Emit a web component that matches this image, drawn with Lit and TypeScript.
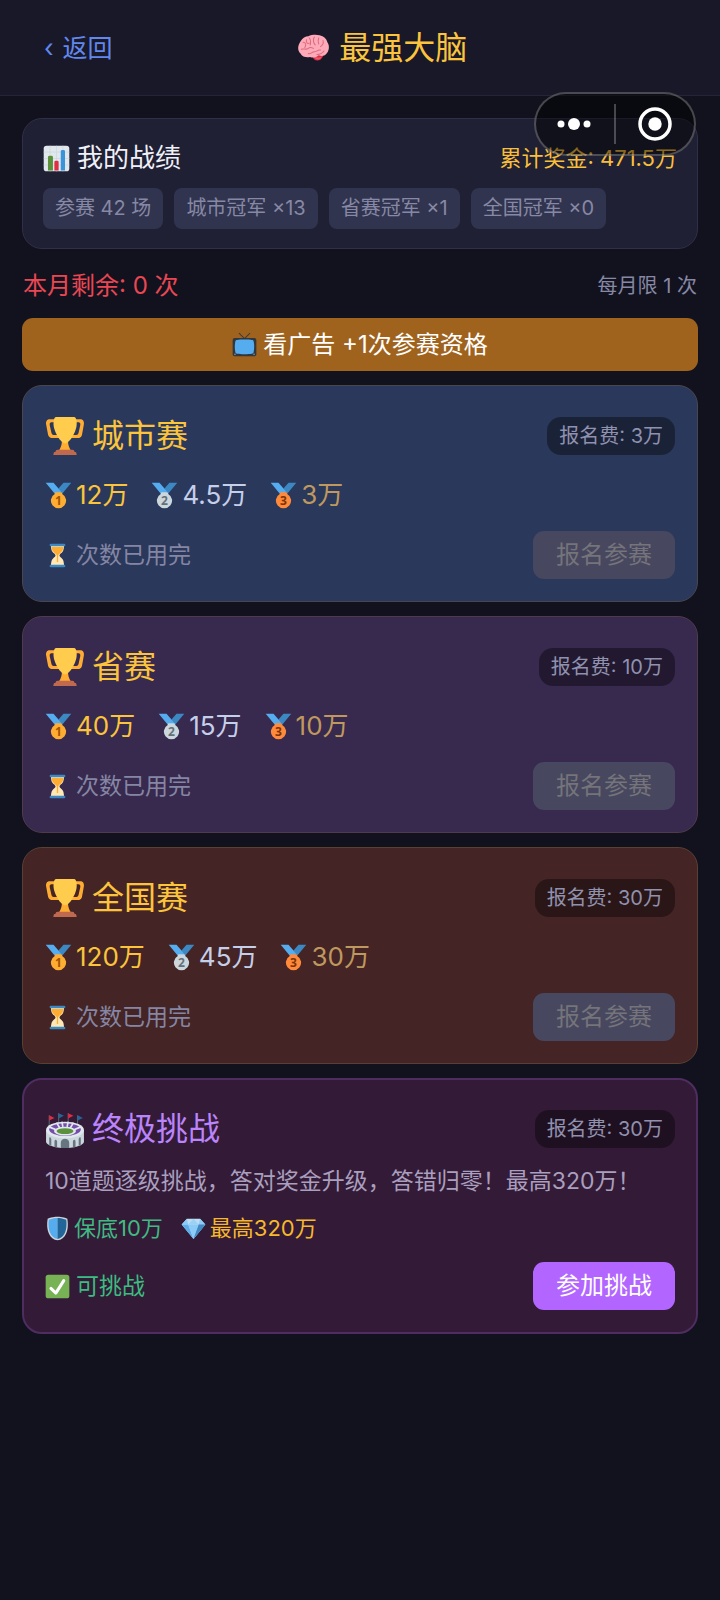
import { LitElement, html, svg, css, nothing } from 'lit';
import { customElement, property } from 'lit/decorators.js';
import { classMap } from 'lit/directives/class-map.js';

const medal = (fill: string, ink: string, place: string) => svg`
  <path fill="#55ACEE" d="M18 8l-7-8H0l14 17 11.5-4.8z"/>
  <path fill="#3B88C3" d="M25 0l-7 8 5.4 7.3 1.2-1.5L36 0z"/>
  <path fill=${fill} d="M23.2 16c.1-.2.1-.4.1-.7a2 2 0 0 0-2-2h-6.6a2 2 0 0 0-2 2c0 .3 0 .5.1.7A10.7 10.7 0 1 0 23.2 16z"/>
  <text x="18" y="31.5" text-anchor="middle" font-family="Noto Sans, sans-serif" font-weight="700" font-size="17" fill=${ink}>${place}</text>
`;

const ICONS = {
  brain: svg`
    <path fill="#DD2E44" d="M17 27c3-3 9-4 13-2-1 5-4 8-7 8-4 0-6-2-6-6z"/>
    <path fill="#EA596E" d="M19 28c3 2 6 2 9 0-1 2-3 4-5 4s-4-2-4-4z"/>
    <path fill="#FFAAB8" d="M3 25c-4-4-3-10 0-14 2-4 6-6 9-6 4-2 10-2 13-1 5 1 8 4 9 8 3 4 2 11-2 14-2 2-5 2-8 1-3 3-7 3-10 2-4 1-9 0-11-4z"/>
    <path fill="none" stroke="#DB6B80" stroke-width="1.2" stroke-linecap="round" d="M6 12c3 0 4 3 2 6M10 9c-1 3 1 5 3 4M13 7c2 2 2 6 1 8M19 6c-2 3-1 7 1 9M24 7c-1 3-1 5 0 7M29 10c1 3-1 6-3 7M4 20c3-1 6 1 8-1s4-1 6 0M12 25c3 1 4-2 7-2s4-3 7-2M22 26c3 0 6-1 8-4"/>
  `,
  chart: svg`
    <rect width="36" height="36" rx="4" fill="#E1E8ED"/>
    <path stroke="#CCD6DD" stroke-width="1" d="M0 9h36M0 18h36M0 27h36M9 0v36M18 0v36M27 0v36"/>
    <path fill="#5C913B" d="M6 16a2 2 0 0 1 2-2h3a2 2 0 0 1 2 2v19H6z"/>
    <path fill="#DD2E44" d="M15 23a2 2 0 0 1 2-2h2a2 2 0 0 1 2 2v12h-6z"/>
    <path fill="#3B94D9" d="M24 8a2 2 0 0 1 2-2h2a2 2 0 0 1 2 2v27h-6z"/>
  `,
  tv: svg`
    <path fill="none" stroke="#3E3A3C" stroke-width="1.6" stroke-linecap="round" d="M10 1l8 8 8-8"/>
    <path fill="#31373D" d="M36 33a3 3 0 0 1-3 3H3a3 3 0 0 1-3-3V11a3 3 0 0 1 3-3h30a3 3 0 0 1 3 3z"/>
    <path fill="#55ACEE" d="M7 11c4-1 18-1 22 0 2 0 3 1 3 3 1 4 1 11 0 15 0 2-1 3-3 3-4 1-18 1-22 0-2 0-3-1-3-3-1-4-1-11 0-15 0-2 1-3 3-3z"/>
    <circle cx="3.5" cy="33" r="1.2" fill="#8899A6"/>
    <circle cx="32.5" cy="33" r="1.2" fill="#8899A6"/>
  `,
  trophy: svg`
    <path fill="#FFAC33" d="M5.1 5h6c1.1 0 1.9-.1 1.9 1V4a2 2 0 0 0-1.9-2h-8c-2 0-3.6 2.1-3 5 0 0 1.8 9.4 1.9 10 .4 1.5 2.2 3 4.1 3H13c1.1 0 0-1.9 0-3v-2a2 2 0 0 1-1.9 2h-4c-1.1 0-1.8-1-2-2L3.5 7.7C3.2 5.8 4 5 5.1 5zm25.8 0h-6C23.8 5 22 4.9 22 6V4c0-1.1 1.8-2 2.9-2h8c2 0 3.6 2.1 3 5 0 0-1.6 9.4-1.8 10-.3 1.5-2 3-4 3H23c-1.1 0-1-1.9-1-3v-2c0 1.1 1.8 2 2.9 2h4c1.1 0 1.8-1 2-2l1.6-7.3C32.9 5.8 32 5 30.9 5zM20.8 22c0-7-2.7 0-2.7 0s-3-7-3 0-3.3 10-3.3 10h12.3s-3.3-3-3.3-10z"/>
    <path fill="#FFCC4D" d="M29.1 6.6C29.1 13.4 22.4 25 18.1 25S7.1 13.4 7.1 6.6C7.1 1.5 8.1 0 10.1 0h16c2 0 3 1.5 3 6.6z"/>
    <path fill="#C1694F" d="M7 36h22v-1a2 2 0 0 0-2-2 2 2 0 0 0-2-2H11a2 2 0 0 0-2 2 2 2 0 0 0-2 2z"/>
  `,
  gold: medal('#FFAC33', '#9E5200', '1'),
  silver: medal('#CCD6DD', '#627077', '2'),
  bronze: medal('#FF8A3B', '#7C3306', '3'),
  hourglass: svg`
    <path fill="#FFE8B6" d="M21 18c0-2 3.2-3.4 5-6 2-3 2-10 2-10H8s0 7 2 10c1.8 2.6 5 4 5 6s-3.2 3.4-5 6c-2 3-2 10-2 10h20s0-7-2-10c-1.8-2.6-5-4-5-6z"/>
    <path fill="#FFAC33" d="M9 5h18c-.2 2.500-1 5-2.200 6.500C23 14 19.500 15.500 19 18v10h-2V18c-.5-2.500-4-4-5.800-6.500C10 10 9.200 7.500 9 5z"/>
    <path fill="#3B88C3" d="M30 34a2 2 0 0 1-2 2H8a2 2 0 0 1-2-2s0-2 2-2h20c2 0 2 2 2 2zm0-32c0 2-2 2-2 2H8C6 4 6 2 6 2a2 2 0 0 1 2-2h20a2 2 0 0 1 2 2z"/>
  `,
  stadium: svg`
    <path stroke="#66757F" stroke-width=".8" d="M3 5v10M12 3v10M21 3v10M30 5v10"/>
    <path fill="#DD2E44" d="M3 5l5 2.500L3 10zM21 3l5 2.500L21 8z"/>
    <path fill="#226699" d="M12 3l5 2.500L12 8zM30 5l5 2.500L30 10z"/>
    <path fill="#CCD6DD" d="M0 19h36v11c0 3-8 6-18 6S0 33 0 30z"/>
    <ellipse cx="18" cy="19" rx="18" ry="8" fill="#E1E8ED"/>
    <ellipse cx="18" cy="18.500" rx="15" ry="6" fill="#744EAA"/>
    <path stroke="#E1E8ED" stroke-width="1.600" d="M10 12l3 5M15 11l1 5M21 11l-1 5M26 12l-3 5M3 16l7 3M33 16l-7 3"/>
    <ellipse cx="18" cy="20" rx="10.500" ry="4.200" fill="#E1E8ED"/>
    <ellipse cx="18" cy="20" rx="8" ry="2.800" fill="#5C913B"/>
    <path fill="#66757F" d="M14 36v-5c0-5 8-5 8 0v5zM3 33v-6c0-2 2-1 2 1v6zM8 35v-5c0-3 2.500-2 2.500 0v5.500zM25.500 35.500v-5.500c0-2 2.500-3 2.500 0v5zM31 34v-6c0-2 2-3 2-1v6z"/>
  `,
  shield: svg`
    <path fill="#CCD6DD" d="M33 3c-7-3-15-3-15-3S10 0 3 3c-3 18 3 31 15 33C30 34 36 21 33 3z"/>
    <path fill="#55ACEE" d="M18 33.900C8 32 2.700 21 4.700 4.700 10 2.600 16 2 18 2z"/>
    <path fill="#269" d="M31.300 4.700C33.300 21 28 32 18 33.900V2c2 0 8 .6 13.300 2.700z"/>
  `,
  gem: svg`
    <path fill="#BDDDF4" d="M8 3h20l8 9-18 22L0 12z"/>
    <path fill="#5DADEC" d="M0 12h10l8 22zM36 12H26l-8 22z"/>
    <path fill="#8CCAF7" d="M10 12h16l-8 22zM8 3l2 9H0zM28 3l-2 9h10z"/>
    <path fill="#9BD1F5" d="M18 3l8 9H10z"/>
    <path fill="#4289C1" d="M26 12h10L18 34z"/>
  `,
  check: svg`
    <rect width="36" height="36" rx="4" fill="#77B255"/>
    <path fill="none" stroke="#FFF" stroke-width="4.600" stroke-linecap="round" stroke-linejoin="round" d="M8 21l7.500 7L27.500 9"/>
  `,
};

type IconName = keyof typeof ICONS;

const icon = (name: IconName, size = 'small') => html`
  <svg class="icon ${size}" viewBox="-1 -1 38 38" aria-hidden="true">${ICONS[name]}</svg>
`;

const base = css`
  * {
    box-sizing: border-box;
  }
  h1,
  h2,
  p {
    margin: 0;
    font-weight: 400;
  }
  button {
    border: 0;
    padding: 0;
    background: none;
    color: inherit;
    font: inherit;
    cursor: pointer;
  }
  .icon {
    flex: none;
    display: block;
  }
  .small {
    width: 25px;
    height: 25px;
  }
  .medium {
    width: 27px;
    height: 27px;
  }
  .large {
    width: 40px;
    height: 40px;
  }
`;

interface Prize {
  icon: IconName;
  text: string;
  tone: string;
}

interface Match {
  kind: string;
  icon: IconName;
  name: string;
  fee: string;
  desc?: string;
  prizes: Prize[];
  open: boolean;
  status: string;
  action: string;
}

const cup = (kind: string, name: string, fee: string, [first, second, third]: string[]): Match => ({
  kind,
  icon: 'trophy',
  name,
  fee,
  prizes: [
    { icon: 'gold', text: first, tone: 'first' },
    { icon: 'silver', text: second, tone: 'second' },
    { icon: 'bronze', text: third, tone: 'third' },
  ],
  open: false,
  status: '次数已用完',
  action: '报名参赛',
});

const MATCHES: Match[] = [
  cup('city', '城市赛', '3万', ['12万', '4.5万', '3万']),
  cup('province', '省赛', '10万', ['40万', '15万', '10万']),
  cup('nation', '全国赛', '30万', ['120万', '45万', '30万']),
  {
    kind: 'ultimate',
    icon: 'stadium',
    name: '终极挑战',
    fee: '30万',
    desc: '10道题逐级挑战，答对奖金升级，答错归零！最高320万！',
    prizes: [
      { icon: 'shield', text: '保底10万', tone: 'safe' },
      { icon: 'gem', text: '最高320万', tone: 'top' },
    ],
    open: true,
    status: '可挑战',
    action: '参加挑战',
  },
];

const STATS = ['参赛 42 场', '城市冠军 ×13', '省赛冠军 ×1', '全国冠军 ×0'];

@customElement('match-card')
export class MatchCard extends LitElement {
  static styles = [
    base,
    css`
      :host {
        display: block;
      }
      .card {
        padding: 22px;
        border: 1px solid;
        border-radius: 20px;
      }
      .city {
        background: #2a385b;
        border-color: #4a464f;
      }
      .province {
        background: #38294e;
        border-color: #4f3b4c;
      }
      .nation {
        background: #442424;
        border-color: #5a3f33;
      }
      .ultimate {
        padding: 21px 21px 22px;
        border-width: 2px;
        background: #331a36;
        border-color: #4f2d60;
      }
      .head,
      .foot {
        display: flex;
        align-items: center;
        justify-content: space-between;
      }
      .head {
        height: 55px;
      }
      .name {
        display: flex;
        align-items: center;
        gap: 7px;
        color: #fbc43c;
        font-size: 32px;
        line-height: 40px;
      }
      .ultimate .name {
        color: #ba84fb;
      }
      .fee {
        padding: 0 12px;
        border-radius: 14px;
        background: rgba(0, 0, 0, 0.38);
        color: #9091ae;
        font-size: 20px;
        line-height: 38px;
      }
      .desc {
        margin-top: 8px;
        color: #a99fbe;
        font-size: 23px;
        line-height: 34px;
      }
      .prizes {
        display: flex;
        gap: 23px;
        margin: 12px 0 16px;
        font-size: 26px;
        line-height: 40px;
      }
      .ultimate .prizes {
        gap: 18px;
        font-size: 22px;
        line-height: 36px;
      }
      .prize {
        display: flex;
        align-items: center;
        gap: 4px;
      }
      .first {
        color: #fbc43c;
      }
      .second {
        color: #c6cfea;
      }
      .third {
        color: #bf985f;
      }
      .safe {
        color: #40b983;
      }
      .top {
        color: #f6b92b;
      }
      .status {
        display: flex;
        align-items: center;
        gap: 6px;
        color: #8586a4;
        font-size: 23px;
        line-height: 34px;
      }
      .status.open {
        color: #3cbc80;
      }
      .action {
        padding: 0 23px;
        border-radius: 11px;
        background: #b266ff;
        color: #fff;
        font-size: 24px;
        line-height: 48px;
      }
      .action:disabled {
        background: #47475f;
        color: #74747a;
        cursor: default;
      }
    `,
  ];

  @property({ attribute: false }) match!: Match;

  render() {
    const { kind, name, fee, desc, prizes, open, status, action } = this.match;
    const size = kind === 'ultimate' ? 'small' : 'medium';
    return html`
      <section class="card ${kind}">
        <div class="head">
          <h2 class="name">${icon(this.match.icon, 'large')}<span>${name}</span></h2>
          <span class="fee">报名费: ${fee}</span>
        </div>
        ${desc ? html`<p class="desc">${desc}</p>` : nothing}
        <div class="prizes">
          ${prizes.map(
            (p) => html`<span class="prize ${p.tone}">${icon(p.icon, size)}${p.text}</span>`
          )}
        </div>
        <div class="foot">
          <span class=${classMap({ status: true, open })}>
            ${icon(open ? 'check' : 'hourglass')}<span>${status}</span>
          </span>
          <button class="action" ?disabled=${!open}>${action}</button>
        </div>
      </section>
    `;
  }
}

@customElement('app-root')
export class AppRoot extends LitElement {
  static styles = [
    base,
    css`
      :host {
        display: block;
        position: relative;
        min-height: 100vh;
        background: #12121e;
        color: #f0f0f8;
        font-family: Inter, 'Noto Sans CJK SC', sans-serif;
      }
      .bar {
        display: flex;
        align-items: center;
        height: 96px;
        padding: 0 24px;
        border-bottom: 1px solid #242438;
        background: #181828;
      }
      .back {
        display: flex;
        gap: 9px;
        padding: 0 20px;
        color: #6288ee;
        font-size: 25px;
        line-height: 40px;
      }
      .title {
        flex: 1;
        display: flex;
        align-items: center;
        justify-content: center;
        gap: 9px;
        color: #fbc43c;
        font-size: 32px;
        line-height: 40px;
      }
      .title .icon {
        width: 33px;
        height: 33px;
      }
      .spacer {
        width: 64px;
      }
      .capsule {
        position: absolute;
        top: 92px;
        right: 24px;
        display: flex;
        align-items: center;
        width: 162px;
        height: 64px;
        border: 2px solid rgba(255, 255, 255, 0.25);
        border-radius: 32px;
        background: rgba(0, 0, 0, 0.45);
      }
      .capsule button {
        flex: 1;
        display: flex;
        justify-content: center;
      }
      .capsule button + button {
        border-left: 2px solid rgba(255, 255, 255, 0.25);
      }
      .capsule svg {
        display: block;
        height: 40px;
      }
      main {
        display: flex;
        flex-direction: column;
        gap: 14px;
        padding: 22px;
      }
      .record {
        padding: 19px 20px;
        border: 1px solid #2f2f47;
        border-radius: 20px;
        background: #1f2034;
      }
      .row {
        display: flex;
        align-items: center;
        justify-content: space-between;
        line-height: 40px;
      }
      .record h2 {
        display: flex;
        align-items: center;
        gap: 7px;
        font-size: 26px;
      }
      .total {
        color: #f9bf3a;
        font-size: 22px;
      }
      .chips {
        display: flex;
        flex-wrap: wrap;
        gap: 11px;
        margin-top: 10px;
      }
      .chip {
        padding: 0 12px;
        border-radius: 8px;
        background: #30344e;
        color: #8788a5;
        font-size: 20px;
        line-height: 41px;
      }
      .quota {
        padding: 5px 1px 0;
        line-height: 36px;
        color: #ea4753;
        font-size: 24px;
      }
      .limit {
        color: #8788a5;
        font-size: 20px;
      }
      .ad {
        display: flex;
        align-items: center;
        justify-content: center;
        gap: 6px;
        border-radius: 11px;
        background: #9f631e;
        color: #fff;
        font-size: 24px;
        line-height: 53px;
      }
    `,
  ];

  render() {
    return html`
      <header class="bar">
        <button class="back"><span>‹</span><span>返回</span></button>
        <h1 class="title">${icon('brain')}<span>最强大脑</span></h1>
        <span class="spacer"></span>
      </header>
      <main>
        <section class="record">
          <div class="row">
            <h2>${icon('chart', 'medium')}我的战绩</h2>
            <span class="total">累计奖金: 471.5万</span>
          </div>
          <div class="chips">${STATS.map((s) => html`<span class="chip">${s}</span>`)}</div>
        </section>
        <div class="row quota">
          <span>本月剩余: 0 次</span>
          <span class="limit">每月限 1 次</span>
        </div>
        <button class="ad">${icon('tv')}<span>看广告 +1次参赛资格</span></button>
        ${MATCHES.map((m) => html`<match-card .match=${m}></match-card>`)}
      </main>
      <div class="capsule">
        <button aria-label="更多">
          <svg width="40" viewBox="0 0 40 40" fill="#fff">
            <circle cx="6" cy="20" r="3.5" />
            <circle cx="19" cy="20" r="6" />
            <circle cx="32" cy="20" r="3.5" />
          </svg>
        </button>
        <button aria-label="关闭">
          <svg width="40" viewBox="0 0 40 40" fill="#fff">
            <circle cx="20" cy="20" r="15" fill="none" stroke="#fff" stroke-width="3.5" />
            <circle cx="20" cy="20" r="6.7" />
          </svg>
        </button>
      </div>
    `;
  }
}
